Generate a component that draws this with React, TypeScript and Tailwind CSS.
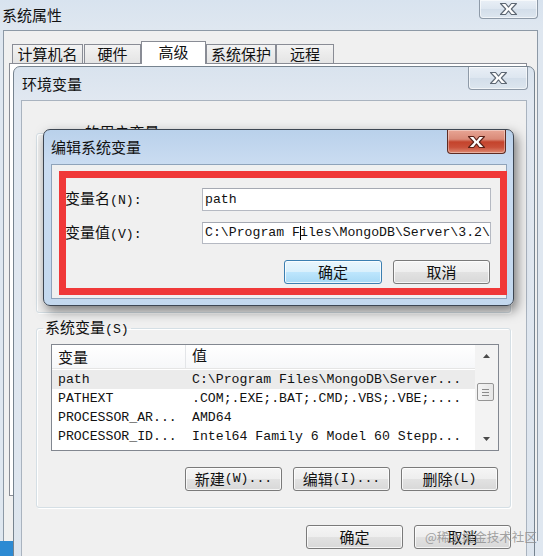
import React from "react";
import clsx from "clsx";

const Z = ({ children }: { children: React.ReactNode }) => (
  <span className="font-['Noto_Sans_CJK_SC',sans-serif] text-[15px]">{children}</span>
);

function XMark({ red }: { red?: boolean }) {
  return (
    <svg width="19" height="14" viewBox="0 0 19 14">
      <path
        d="M1.5 1.5H6.6L9.5 5.1L12.4 1.5H17.5L12.3 7L17.5 12.5H12.4L9.5 8.9L6.6 12.5H1.5L6.7 7Z"
        fill="#fff"
        stroke={red ? "#5a2218" : "#5d6773"}
        strokeWidth="1.1"
        strokeLinejoin="round"
      />
    </svg>
  );
}

function CloseBtn({ red, className }: { red?: boolean; className: string }) {
  return (
    <div
      className={clsx(
        "flex items-center justify-center rounded-b-[4px] border border-t-0",
        red
          ? "border-[#5e2b22] bg-[linear-gradient(#e8a595,#d98a78_40%,#c4432c_52%,#c9503a_75%,#de8a72)] shadow-[inset_0_0_0_1px_rgba(255,255,255,0.35)]"
          : "border-[#8e9aa8] bg-[linear-gradient(#e9eff6,#dde6f0_50%,#d3deea_52%,#dde6ef)] shadow-[inset_0_0_0_1px_rgba(255,255,255,0.6)]",
        className
      )}
    >
      <XMark red={red} />
    </div>
  );
}

function Btn({ children, focus, w = "w-[97px]" }: { children: React.ReactNode; focus?: boolean; w?: string }) {
  return (
    <div
      className={clsx(
        "flex h-[24px] items-center justify-center rounded-[3px] border shadow-[inset_0_0_0_1px_rgba(255,255,255,0.75)]",
        w,
        focus
          ? "border-[#3c7fb1] bg-[linear-gradient(#eaf6fd,#d9f0fc_50%,#bee6fd_50%,#a7d9f5)]"
          : "border-[#7a7a7a] bg-[linear-gradient(#f5f5f5,#eeeeee_50%,#e2e2e2_50%,#d8d8d8)]"
      )}
    >
      {children}
    </div>
  );
}

function Tab({ label, w, active }: { label: string; w: string; active?: boolean }) {
  return (
    <div
      className={clsx(
        "flex items-center justify-center border border-b-0 border-[#898c95]",
        w,
        active ? "h-[23px] bg-white pb-[2px]" : "mb-px h-[19px] bg-[linear-gradient(#f3f3f3,#e4e4e4)]"
      )}
    >
      <Z>{label}</Z>
    </div>
  );
}

function Arrow({ down }: { down?: boolean }) {
  return (
    <svg width="7" height="4" viewBox="0 0 7 4">
      <path d={down ? "M0 0H7L3.5 4Z" : "M0 4H7L3.5 0Z"} fill="#4a4a4a" />
    </svg>
  );
}

const rows = [
  ["path", "C:\\Program Files\\MongoDB\\Server..."],
  ["PATHEXT", ".COM;.EXE;.BAT;.CMD;.VBS;.VBE;...."],
  ["PROCESSOR_AR...", "AMD64"],
  ["PROCESSOR_ID...", "Intel64 Family 6 Model 60 Stepp..."],
];

export default function App() {
  return (
    <div className="relative h-[556px] w-[543px] overflow-hidden bg-[linear-gradient(#d8e3ef,#dfe7f0_30px)] font-['Liberation_Mono','Noto_Sans_CJK_SC',monospace] text-[13.2px] leading-[18px] text-[#111]">
      {/* 系统属性 */}
      <div className="flex h-[30px] items-start">
        <div className="flex h-full items-center pl-[2px]">
          <Z>系统属性</Z>
        </div>
        <CloseBtn className="ml-auto mr-[5px] h-[19px] w-[59px]" />
      </div>
      <div className="ml-[3px] mr-[5px] h-[511px] border-x border-t border-[#8d99a6] bg-[#f0f0f0]">
        <div className="relative z-10 -mb-px mt-[10px] flex h-[23px] items-end pl-[8px]">
          <Tab label="计算机名" w="w-[71px]" />
          <Tab label="硬件" w="ml-px w-[57px]" />
          <Tab label="高级" w="w-[65px]" active />
          <Tab label="系统保护" w="w-[70px]" />
          <Tab label="远程" w="w-[58px]" />
        </div>
        <div className="ml-[5px] mr-[10px] h-[433px] border border-[#898c95] bg-white" />
      </div>
      <div className="flex h-[15px]">
        <div className="w-[13px] bg-[#2c8ad3]" />
      </div>

      {/* 环境变量 */}
      <div className="absolute left-[13px] top-[66px] flex h-[520px] w-[522px] flex-col rounded-t-[7px] border border-[#76838f] bg-[linear-gradient(#d9e3ee,#e1e8f1_34px,#dde5ee)]">
        <div className="flex h-[33px] items-start">
          <div className="flex h-full items-center pl-[8px]">
            <Z>环境变量</Z>
          </div>
          <CloseBtn className="ml-auto mr-[6px] h-[23px] w-[60px]" />
        </div>
        <div className="mx-[7px] flex-1 border border-[#a9b3bf] bg-[#f0f0f0]">
          <fieldset className="ml-[14px] mt-[22px] h-[190px] w-[475px] rounded-[3px] border border-[#d5dfe5] shadow-[inset_1px_1px_0_#fff,1px_1px_0_#fff]">
            <legend className="ml-[6px] px-[2px]">
              user <Z>的用户变量</Z>(U)
            </legend>
          </fieldset>
          <fieldset className="ml-[14px] mt-[5px] w-[475px] rounded-[3px] border border-[#d5dfe5] pb-[16px] shadow-[inset_1px_1px_0_#fff,1px_1px_0_#fff]">
            <legend className="ml-[6px] px-[2px]">
              <Z>系统变量</Z>(S)
            </legend>
            <div className="ml-[14px] mt-[5px] flex h-[107px] w-[448px] border border-[#828790] bg-white">
              <div className="flex flex-1 flex-col">
                <div className="flex h-[24px] items-center border-b border-[#e5e5e5] bg-[linear-gradient(#ffffff,#f6f7f9)]">
                  <div className="flex h-full w-[134px] items-center border-r border-[#e3e5e8] pl-[6px]">
                    <Z>变量</Z>
                  </div>
                  <div className="pl-[6px]">
                    <Z>值</Z>
                  </div>
                </div>
                <div className="pt-px">
                  {rows.map(([k, v], i) => (
                    <div
                      key={k}
                      className={clsx("flex h-[19px] items-center whitespace-nowrap", i === 0 && "bg-[#ebebeb]")}
                    >
                      <div className="w-[134px] pl-[6px]">{k}</div>
                      <div className="pl-[6px]">{v}</div>
                    </div>
                  ))}
                </div>
              </div>
              <div className="flex w-[23px] flex-col bg-[#f3f3f3]">
                <div className="flex h-[22px] items-center justify-center">
                  <Arrow />
                </div>
                <div className="ml-[2px] mt-[16px] flex h-[18px] w-[17px] flex-col items-center justify-center gap-[2px] rounded-[2px] border border-[#959595] bg-[linear-gradient(90deg,#f4f4f4,#e6e6e6)]">
                  <div className="h-px w-[7px] bg-[#8a8a8a]" />
                  <div className="h-px w-[7px] bg-[#8a8a8a]" />
                  <div className="h-px w-[7px] bg-[#8a8a8a]" />
                </div>
                <div className="mt-auto flex h-[22px] items-center justify-center">
                  <Arrow down />
                </div>
              </div>
            </div>
            <div className="mt-[16px] flex justify-end gap-[11px] pr-[12px]">
              <Btn>
                <Z>新建</Z>(W)...
              </Btn>
              <Btn>
                <Z>编辑</Z>(I)...
              </Btn>
              <Btn>
                <Z>删除</Z>(L)
              </Btn>
            </div>
          </fieldset>
          <div className="mt-[17px] flex justify-end gap-[11px] pr-[15px]">
            <Btn>
              <Z>确定</Z>
            </Btn>
            <Btn>
              <Z>取消</Z>
            </Btn>
          </div>
        </div>
      </div>

      {/* 编辑系统变量 */}
      <div className="absolute left-[43px] top-[129px] flex h-[177px] w-[471px] flex-col rounded-[7px] border border-[#3d4652] bg-[linear-gradient(#b9d1eb,#cadcf1_34px,#c3d8ee)] shadow-[3px_5px_12px_rgba(0,0,0,0.5)]">
        <div className="flex h-[34px] items-start">
          <div className="flex h-full items-center pl-[7px]">
            <Z>编辑系统变量</Z>
          </div>
          <CloseBtn red className="ml-auto mr-[7px] h-[24px] w-[59px]" />
        </div>
        <div className="relative mb-[6px] ml-[7px] mr-[6px] flex-1 border border-[#8fa3ba] bg-[#f0f0f0]">
          <div className="mt-[23px] flex items-center">
            <div className="w-[150px] pl-[13px]">
              <Z>变量名</Z>(N):
            </div>
            <div className="flex h-[23px] w-[289px] items-center border border-[#b5b9c2] border-t-[#a5a9b2] bg-white pl-[2px]">
              path
            </div>
          </div>
          <div className="mt-[11px] flex items-center">
            <div className="w-[150px] pl-[13px]">
              <Z>变量值</Z>(V):
            </div>
            <div className="flex h-[22px] w-[289px] items-center overflow-hidden whitespace-nowrap border border-[#b5b9c2] border-t-[#a5a9b2] bg-white pl-[2px]">
              C:\Program F<span className="-mr-px inline-block h-[14px] w-px bg-black" />iles\MongoDB\Server\3.2\
            </div>
          </div>
          <div className="mt-[16px] flex justify-end gap-[11px] pr-[16px]">
            <Btn focus w="w-[98px]">
              <Z>确定</Z>
            </Btn>
            <Btn>
              <Z>取消</Z>
            </Btn>
          </div>
          <div className="pointer-events-none absolute -right-px bottom-[3px] left-[7px] top-[6px] border-[7px] border-[#f03838]" />
        </div>
      </div>

      <div className="absolute left-[425px] top-[528px] font-['Noto_Sans_CJK_SC',sans-serif] text-[12.5px] text-[rgba(140,140,140,0.8)]">
        @稀土掘金技术社区
      </div>
    </div>
  );
}
